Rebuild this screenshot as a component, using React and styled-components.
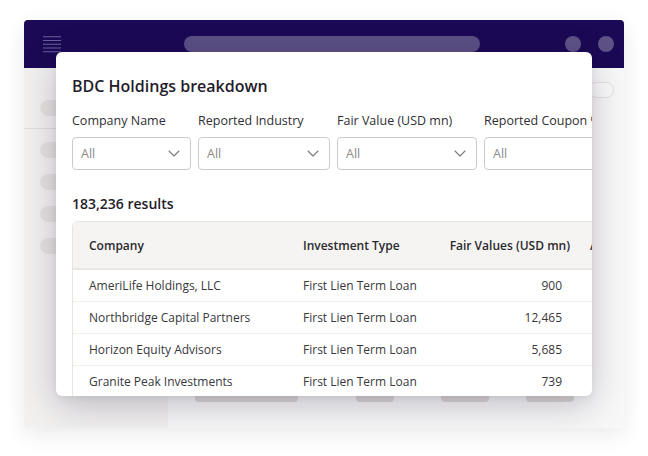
import React from 'react';
import styled, {createGlobalStyle} from 'styled-components';

const GlobalStyle = createGlobalStyle`
  html, body {
    margin: 0;
    background: #ffffff;
    font-family: "Open Sans", "Liberation Sans", sans-serif;
  }
`;

const Stage = styled.div`
  width: 648px;
  height: 456px;
  box-sizing: border-box;
  padding: 20px 24px 28px;
`;

const AppWindow = styled.div`
  position: relative;
  width: 600px;
  height: 408px;
  border-radius: 4px;
  overflow: hidden;
  display: grid;
  grid-template-rows: 48px 1fr;
  box-shadow: 0 6px 22px rgba(0, 0, 0, 0.09);
`;

const TopBar = styled.div`
  background: #1c0955;
  display: flex;
  align-items: center;
  padding: 0 10px 0 19px;
`;

const Search = styled.div`
  width: 296px;
  height: 16px;
  border-radius: 8px;
  background: #5b5084;
  margin-left: 123px;
`;

const Dots = styled.div`
  margin-left: auto;
  display: flex;
  gap: 17px;
`;

const Dot = styled.div`
  width: 16px;
  height: 16px;
  border-radius: 50%;
  background: #5e5286;
`;

const Body = styled.div`
  display: grid;
  grid-template-columns: 144px 1fr;
`;

const Sidebar = styled.div`
  background: #f2f1f0;
  display: flex;
  flex-direction: column;
  padding-top: 32px;
`;

const SideTop = styled.div`
  padding: 0 0 12px 16px;
  border-bottom: 1px solid #e2e0de;
`;

const SideList = styled.div`
  display: flex;
  flex-direction: column;
  gap: 16px;
  padding: 13px 0 0 16px;
`;

const SidePill = styled.div`
  width: 96px;
  height: 16px;
  border-radius: 8px;
  background: #e5e3e1;
`;

const Main = styled.div`
  background: #f8f8f8;
  display: flex;
  flex-direction: column;
`;

const MainToolbar = styled.div`
  display: flex;
  justify-content: flex-end;
  padding: 14px 10px 0;
  height: 30px;
`;

const OutlinePill = styled.div`
  width: 24px;
  height: 14px;
  border: 1px solid #e6e2de;
  border-radius: 8px;
  background: #fbfbfb;
`;

const SkeletonRow = styled.div`
  margin-top: auto;
  margin-bottom: 26px;
  display: flex;
  align-items: center;
  padding-left: 27px;
`;

const Bar = styled.div`
  width: ${p => p.$w}px;
  margin-right: ${p => p.$gap || 0}px;
  height: 12px;
  border-radius: 4px;
  background: #dcdad8;
`;

const Modal = styled.div`
  position: absolute;
  left: 32px;
  top: 32px;
  width: 536px;
  height: 344px;
  background: #ffffff;
  border-radius: 6px;
  overflow: hidden;
  box-sizing: border-box;
  padding: 23px 0 0 16px;
  box-shadow: 0 10px 36px rgba(20, 10, 40, 0.24), 0 2px 6px rgba(0, 0, 0, 0.06);
`;

const Title = styled.h2`
  margin: 0;
  font-size: 16px;
  line-height: 22px;
  font-weight: 600;
  color: #1f1d2b;
  white-space: nowrap;
`;

const Filters = styled.div`
  display: flex;
  gap: 7px;
  margin-top: 15px;
`;

const Filter = styled.div`
  flex: 0 0 ${p => p.$w}px;
  display: flex;
  flex-direction: column;
  gap: 7px;
`;

const Label = styled.div`
  font-size: 12.5px;
  line-height: 18px;
  color: #2f2f33;
  white-space: nowrap;
`;

const Select = styled.div`
  height: 33px;
  box-sizing: border-box;
  border: 1px solid #cdcac7;
  border-radius: 4px;
  display: flex;
  align-items: center;
  justify-content: space-between;
  padding: 0 10px 0 8px;
  font-size: 12.5px;
  color: #8c8c8c;
`;

const Results = styled.div`
  margin-top: 24px;
  font-size: 14px;
  line-height: 20px;
  font-weight: 600;
  color: #1f1d2b;
`;

const Table = styled.div`
  margin-top: 7px;
  width: 680px;
  border: 1px solid #e8e4e0;
  border-radius: 6px 0 0 0;
  display: grid;
  grid-template-columns: 214px 146px 141px 1fr;
`;

const HeadCell = styled.div`
  height: 46px;
  background: #f5f4f2;
  border-bottom: 2px solid #ebe7e2;
  display: flex;
  align-items: center;
  justify-content: ${p => (p.$right ? 'flex-end' : 'flex-start')};
  padding: ${p => (p.$right ? '0 4px 0 0' : '0 0 0 16px')};
  font-size: 12px;
  font-weight: 600;
  color: #2a2a2e;
  white-space: nowrap;
`;

const Cell = styled.div`
  height: 31px;
  border-bottom: 1px solid #f4eee8;
  display: flex;
  align-items: center;
  justify-content: ${p => (p.$right ? 'flex-end' : 'flex-start')};
  padding: ${p => (p.$right ? '0 12px 0 0' : '0 0 0 16px')};
  font-size: 12px;
  color: #38383c;
  white-space: nowrap;
`;

const Chevron = () => (
  <svg width="12" height="7" viewBox="0 0 12 7" fill="none">
    <path d="M1 1l5 5 5-5" stroke="#7a7a7a" strokeWidth="1.1" strokeLinecap="round" strokeLinejoin="round" />
  </svg>
);

const Hamburger = () => (
  <svg width="18" height="17" viewBox="0 0 18 17">
    {[0.75, 4.5, 8.25, 12, 15.75].map(y => (
      <line key={y} x1="0" x2="18" y1={y} y2={y} stroke="#6d609f" strokeWidth="1.2" />
    ))}
  </svg>
);

const filters = [
  {label: 'Company Name', w: 119},
  {label: 'Reported Industry', w: 132},
  {label: 'Fair Value (USD mn)', w: 140},
  {label: 'Reported Coupon %', w: 140},
];

const rows = [
  ['AmeriLife Holdings, LLC', 'First Lien Term Loan', '900'],
  ['Northbridge Capital Partners', 'First Lien Term Loan', '12,465'],
  ['Horizon Equity Advisors', 'First Lien Term Loan', '5,685'],
  ['Granite Peak Investments', 'First Lien Term Loan', '739'],
];

export default function App() {
  return (
    <Stage>
      <GlobalStyle />
      <AppWindow>
        <TopBar>
          <Hamburger />
          <Search />
          <Dots>
            <Dot />
            <Dot />
          </Dots>
        </TopBar>
        <Body>
          <Sidebar>
            <SideTop>
              <SidePill />
            </SideTop>
            <SideList>
              <SidePill />
              <SidePill />
              <SidePill />
              <SidePill />
            </SideList>
          </Sidebar>
          <Main>
            <MainToolbar>
              <OutlinePill />
            </MainToolbar>
            <SkeletonRow>
              <Bar $w={103} $gap={58} />
              <Bar $w={38} $gap={47} />
              <Bar $w={48} $gap={37} />
              <Bar $w={48} />
            </SkeletonRow>
          </Main>
        </Body>

        <Modal>
          <Title>BDC Holdings breakdown</Title>
          <Filters>
            {filters.map(f => (
              <Filter key={f.label} $w={f.w}>
                <Label>{f.label}</Label>
                <Select>
                  <span>All</span>
                  <Chevron />
                </Select>
              </Filter>
            ))}
          </Filters>
          <Results>183,236 results</Results>
          <Table>
            <HeadCell>Company</HeadCell>
            <HeadCell>Investment Type</HeadCell>
            <HeadCell $right>Fair Values (USD mn)</HeadCell>
            <HeadCell>Avg. Coupon</HeadCell>
            {rows.map(r => (
              <React.Fragment key={r[0]}>
                <Cell>{r[0]}</Cell>
                <Cell>{r[1]}</Cell>
                <Cell $right>{r[2]}</Cell>
                <Cell />
              </React.Fragment>
            ))}
          </Table>
        </Modal>
      </AppWindow>
    </Stage>
  );
}
